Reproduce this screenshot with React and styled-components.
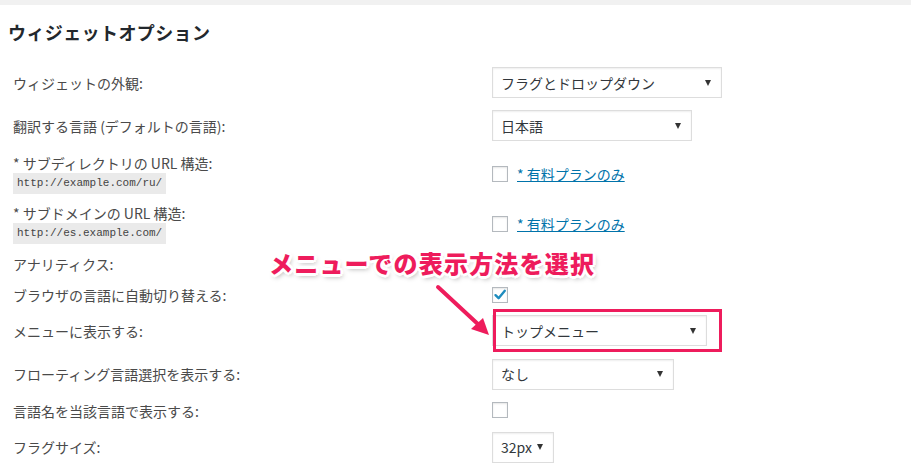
import styled, { createGlobalStyle } from "styled-components";

const GlobalStyle = createGlobalStyle`
  body {
    margin: 0;
    background: #fff;
    font-family: "Noto Sans CJK JP", "Noto Sans", sans-serif;
  }
`;

const rows = [
  { label: "ウィジェットの外観:", h: 37, control: { type: "select", value: "フラグとドロップダウン", w: 230 } },
  { label: "翻訳する言語 (デフォルトの言語):", h: 49, control: { type: "select", value: "日本語", w: 200 } },
  { label: "* サブディレクトリの URL 構造:", code: "http://example.com/ru/", h: 48, control: { type: "paid" } },
  { label: "* サブドメインの URL 構造:", code: "http://es.example.com/", h: 52, control: { type: "paid" } },
  { label: "アナリティクス:", h: 28 },
  { label: "ブラウザの言語に自動切り替える:", h: 34, control: { type: "check", checked: true } },
  { label: "メニューに表示する:", h: 37, control: { type: "select", value: "トップメニュー", w: 215, highlight: true } },
  { label: "フローティング言語選択を表示する:", h: 50, control: { type: "select", value: "なし", w: 182 } },
  { label: "言語名を当該言語で表示する:", h: 24, control: { type: "check" } },
  { label: "フラグサイズ:", h: 48, control: { type: "select", value: "32px", w: 62 } },
];

const Control = ({ control }) => {
  if (!control) return null;
  if (control.type === "select") {
    return (
      <SelectWrap>
        <Select $width={control.w}>
          <span>{control.value}</span>
          <Caret />
        </Select>
        {control.highlight && <Highlight />}
      </SelectWrap>
    );
  }
  if (control.type === "check") {
    return (
      <Checkbox>
        {control.checked && (
          <svg width="14" height="14" viewBox="0 0 14 14">
            <path d="M2.5 7.2 L5.6 10.2 L11.8 2.8" fill="none" stroke="#1e8cbe" strokeWidth="2.4" strokeLinecap="round" strokeLinejoin="round" />
          </svg>
        )}
      </Checkbox>
    );
  }
  return (
    <Inline>
      <Checkbox />
      <PaidLink href="#">* 有料プランのみ</PaidLink>
    </Inline>
  );
};

const App = () => {
  return (
    <Page>
      <GlobalStyle />
      <TopStrip />
      <Title>ウィジェットオプション</Title>
      <Form>
        {rows.map((row, i) => (
          <Row key={i} $height={row.h}>
            <LabelBlock>
              <Label>{row.label}</Label>
              {row.code && <Code>{row.code}</Code>}
            </LabelBlock>
            <div>
              <Control control={row.control} />
            </div>
          </Row>
        ))}
      </Form>
      <Callout>メニューでの表示方法を選択</Callout>
      <Arrow width="70" height="70" viewBox="0 0 70 70">
        <line x1="6" y1="5" x2="48" y2="44" stroke="#ee1c5c" strokeWidth="4" strokeLinecap="round" />
        <polygon points="57,53 39,47 51,36" fill="#ee1c5c" />
      </Arrow>
    </Page>
  );
};

export default App;

const Page = styled.div`
  position: relative;
  width: 911px;
  height: 467px;
  overflow: hidden;
  background: #fff;
`;

const TopStrip = styled.div`
  height: 5px;
  background: #f1f1f1;
`;

const Title = styled.h2`
  margin: 14px 0 0 8px;
  font-size: 18px;
  line-height: 26px;
  font-weight: 700;
  color: #23282d;
  letter-spacing: 0.4px;
`;

const Form = styled.div`
  margin-top: 19px;
  padding-left: 13px;
`;

const Row = styled.div`
  display: grid;
  grid-template-columns: 479px 1fr;
  align-items: center;
  height: ${(p) => p.$height}px;
`;

const LabelBlock = styled.div`
  display: flex;
  flex-direction: column;
  align-items: flex-start;
`;

const Label = styled.span`
  font-size: 14px;
  line-height: 18px;
  color: #4a4a4a;
`;

const Code = styled.code`
  margin-top: 1px;
  padding: 0 4px;
  background: #eaeaea;
  font-family: "Liberation Mono", "DejaVu Sans Mono", monospace;
  font-size: 11px;
  line-height: 21px;
  color: #444;
`;

const SelectWrap = styled.div`
  position: relative;
  display: inline-block;
  vertical-align: middle;
`;

const Select = styled.div`
  box-sizing: border-box;
  display: flex;
  align-items: center;
  justify-content: space-between;
  width: ${(p) => p.$width}px;
  height: 31px;
  padding: 0 10px 0 8px;
  border: 1px solid #ddd;
  box-shadow: inset 0 1px 2px rgba(0, 0, 0, 0.07);
  background: #fff;
  font-size: 14px;
  color: #32373c;
`;

const Caret = styled.span`
  width: 0;
  height: 0;
  border-left: 3.5px solid transparent;
  border-right: 3.5px solid transparent;
  border-top: 6px solid #333;
`;

const Highlight = styled.div`
  position: absolute;
  left: 1px;
  top: -6px;
  right: -15px;
  bottom: -6px;
  border: 3px solid #ee1c5c;
  pointer-events: none;
`;

const Checkbox = styled.span`
  box-sizing: border-box;
  display: inline-flex;
  align-items: center;
  justify-content: center;
  width: 16px;
  height: 16px;
  border: 1px solid #b4b9be;
  background: #fff;
  box-shadow: inset 0 1px 2px rgba(0, 0, 0, 0.1);
`;

const Inline = styled.div`
  display: flex;
  align-items: center;
  gap: 9px;
`;

const PaidLink = styled.a`
  font-size: 14px;
  line-height: 18px;
  color: #0073aa;
  text-decoration: underline;
`;

const Callout = styled.div`
  position: absolute;
  left: 269px;
  top: 249px;
  font-size: 24px;
  line-height: 28px;
  font-weight: 900;
  color: #ee1c5c;
  letter-spacing: 1.2px;
  text-shadow: -2px -2px 0 #fff, 2px -2px 0 #fff, -2px 2px 0 #fff, 2px 2px 0 #fff,
    0 -3px 0 #fff, 0 3px 0 #fff, -3px 0 0 #fff, 3px 0 0 #fff,
    2px 3px 5px rgba(0, 0, 0, 0.35);
`;

const Arrow = styled.svg`
  position: absolute;
  left: 432px;
  top: 282px;
  overflow: visible;
`;
